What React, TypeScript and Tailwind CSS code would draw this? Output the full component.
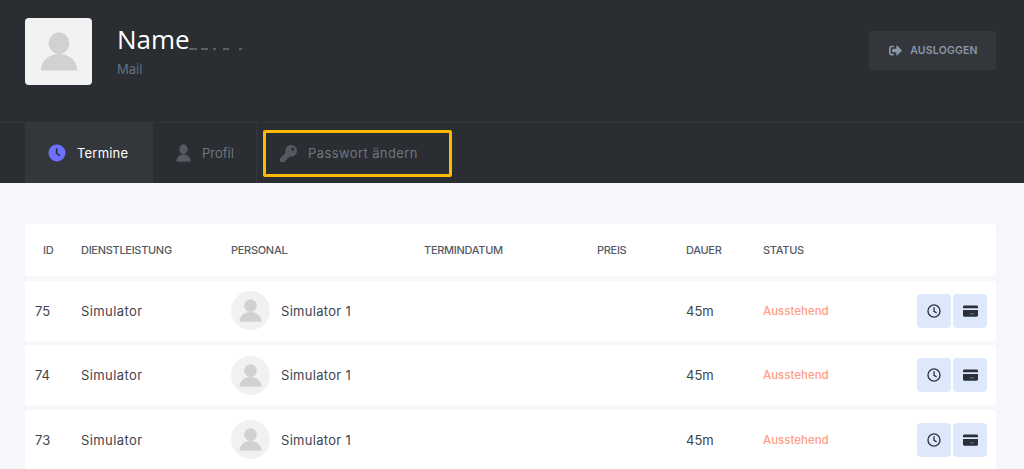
import { FaKey, FaSignOutAlt } from "react-icons/fa";

function Person({ className }: { className?: string }) {
  return (
    <svg viewBox="0 0 40 40" preserveAspectRatio="none" className={className} fill="currentColor">
      <circle cx="20" cy="11.500" r="11" />
      <path d="M1 39.500c0-10 8-17 19-17s19 7 19 17z" />
    </svg>
  );
}

function ClockSolid() {
  return (
    <svg viewBox="0 0 18 18" className="h-[18px] w-[18px]">
      <circle cx="9" cy="9" r="8.500" fill="#6c72ff" />
      <path d="M8.600 4.200v5.200l3.400 2.400" fill="none" stroke="#2a2d33" strokeWidth="1.600" />
    </svg>
  );
}

function ClockOutline() {
  return (
    <svg viewBox="0 0 16 16" className="h-[14px] w-[14px]" fill="none" stroke="#2f3542" strokeWidth="1.500">
      <circle cx="8" cy="8" r="6.900" />
      <path d="M8 3.800v4.600l3 1.700" />
    </svg>
  );
}

function CardIcon() {
  return (
    <svg viewBox="0 0 16 12" className="h-[12px] w-[15px]">
      <path d="M1.500 0h13A1.500 1.500 0 0 1 16 1.500V3H0V1.500A1.500 1.500 0 0 1 1.500 0z" fill="#2a2f3a" />
      <path d="M0 5h16v5.500a1.500 1.500 0 0 1-1.500 1.500h-13A1.500 1.500 0 0 1 0 10.500z" fill="#2a2f3a" />
      <path d="M7.500 9h4" stroke="#8a93a3" strokeWidth="0.800" />
    </svg>
  );
}

const HEAD = "text-[11px] font-medium uppercase tracking-[-0.3px] text-[#555b66]";

function Row({ id }: { id: string }) {
  return (
    <div className="grid h-[60px] grid-cols-[56px_150px_193px_173px_89px_77px_1fr] items-center rounded-[2px] bg-white text-[13px] text-[#3f444d]">
      <div className="pl-[10px] pt-[2px]">{id}</div>
      <div className="pt-[2px] tracking-[0.4px]">Simulator</div>
      <div className="flex items-center gap-[11px]">
        <div className="flex h-[39px] w-[39px] items-center justify-center rounded-full bg-[#f1f1f1]">
          <Person className="h-[23px] w-[23px] text-[#d0d1d3]" />
        </div>
        <span className="pt-[2px] tracking-[0.3px]">Simulator 1</span>
      </div>
      <div />
      <div />
      <div className="pt-[2px]">45m</div>
      <div className="flex items-center justify-between pr-[9px]">
        <span className="pt-[2px] text-[11.500px] font-medium text-[#ff9d85]">Ausstehend</span>
        <div className="flex gap-[2px]">
          <div className="flex h-[34px] w-[34px] items-center justify-center rounded-[4px] bg-[#dde9fb]">
            <ClockOutline />
          </div>
          <div className="flex h-[34px] w-[34px] items-center justify-center rounded-[4px] bg-[#dde9fb]">
            <CardIcon />
          </div>
        </div>
      </div>
    </div>
  );
}

export default function App() {
  return (
    <div className="h-[469px] w-[1024px] overflow-hidden bg-[#f5f7fb] font-['Inter',sans-serif]">
      <header className="flex h-[122px] items-start justify-between bg-[#2a2d32] pl-[25px] pr-[28px] pt-[18px]">
        <div className="flex">
          <div className="flex h-[67px] w-[67px] items-center justify-center rounded-[4px] bg-[#f2f2f2]">
            <Person className="h-[39px] w-[38px] text-[#d0d1d3]" />
          </div>
          <div className="relative ml-[25px]">
            <div className="pt-[2px] font-['Open_Sans',sans-serif] text-[26px] leading-[38px] text-white">Name</div>
            <svg viewBox="0 0 60 2" className="absolute left-[70px] top-[30px] h-[2px] w-[60px]">
              <path d="M2 1h8M14 1h7M26 1h3M36 1h6M52 1h3" stroke="#8f9297" strokeWidth="1" />
            </svg>
            <div className="mt-[2px] text-[13px] leading-[18px] text-[#626f80]">Mail</div>
          </div>
        </div>
        <button className="mt-[13px] flex h-[39px] w-[127px] items-center justify-center gap-[8px] rounded-[2px] bg-[#33363b] pl-[2px] text-[10.500px] font-semibold tracking-[0.2px] text-[#8b98a8]">
          <FaSignOutAlt className="h-[13px] w-[13px]" />
          AUSLOGGEN
        </button>
      </header>
      <nav className="flex h-[61px] border-t border-[#33363b] bg-[#2a2d32] pl-[25px]">
        <div className="flex w-[128px] items-center gap-[11px] bg-[#33363b] pl-[23px] text-[13px] tracking-[0.2px] text-white">
          <ClockSolid />
          <span className="pt-[1px]">Termine</span>
        </div>
        <div className="flex w-[104px] items-center gap-[11px] border-r border-[#33363b] pl-[23px] text-[13px] text-[#70757d]">
          <Person className="h-[18px] w-[15px] text-[#555a61]" />
          <span className="pt-[1px]">Profil</span>
        </div>
        <div className="ml-[6px] mt-[7px] flex h-[47px] w-[189px] items-center gap-[11px] rounded-[2px] border-[3px] border-[#fcb900] pl-[14px] text-[13px] tracking-[0.4px] text-[#70757d]">
          <FaKey className="h-[17px] w-[17px] text-[#555a61]" />
          Passwort ändern
        </div>
      </nav>
      <main className="ml-[25px] mr-[28px] mt-[41px] flex flex-col gap-[4.500px]">
        <div className="grid h-[52px] grid-cols-[56px_150px_193px_173px_89px_77px_1fr] items-center rounded-[2px] bg-white">
          <div className={HEAD + " pl-[18px]"}>ID</div>
          <div className={HEAD}>Dienstleistung</div>
          <div className={HEAD}>Personal</div>
          <div className={HEAD}>Termindatum</div>
          <div className={HEAD}>Preis</div>
          <div className={HEAD}>Dauer</div>
          <div className={HEAD}>Status</div>
        </div>
        <Row id="75" />
        <Row id="74" />
        <Row id="73" />
      </main>
    </div>
  );
}
